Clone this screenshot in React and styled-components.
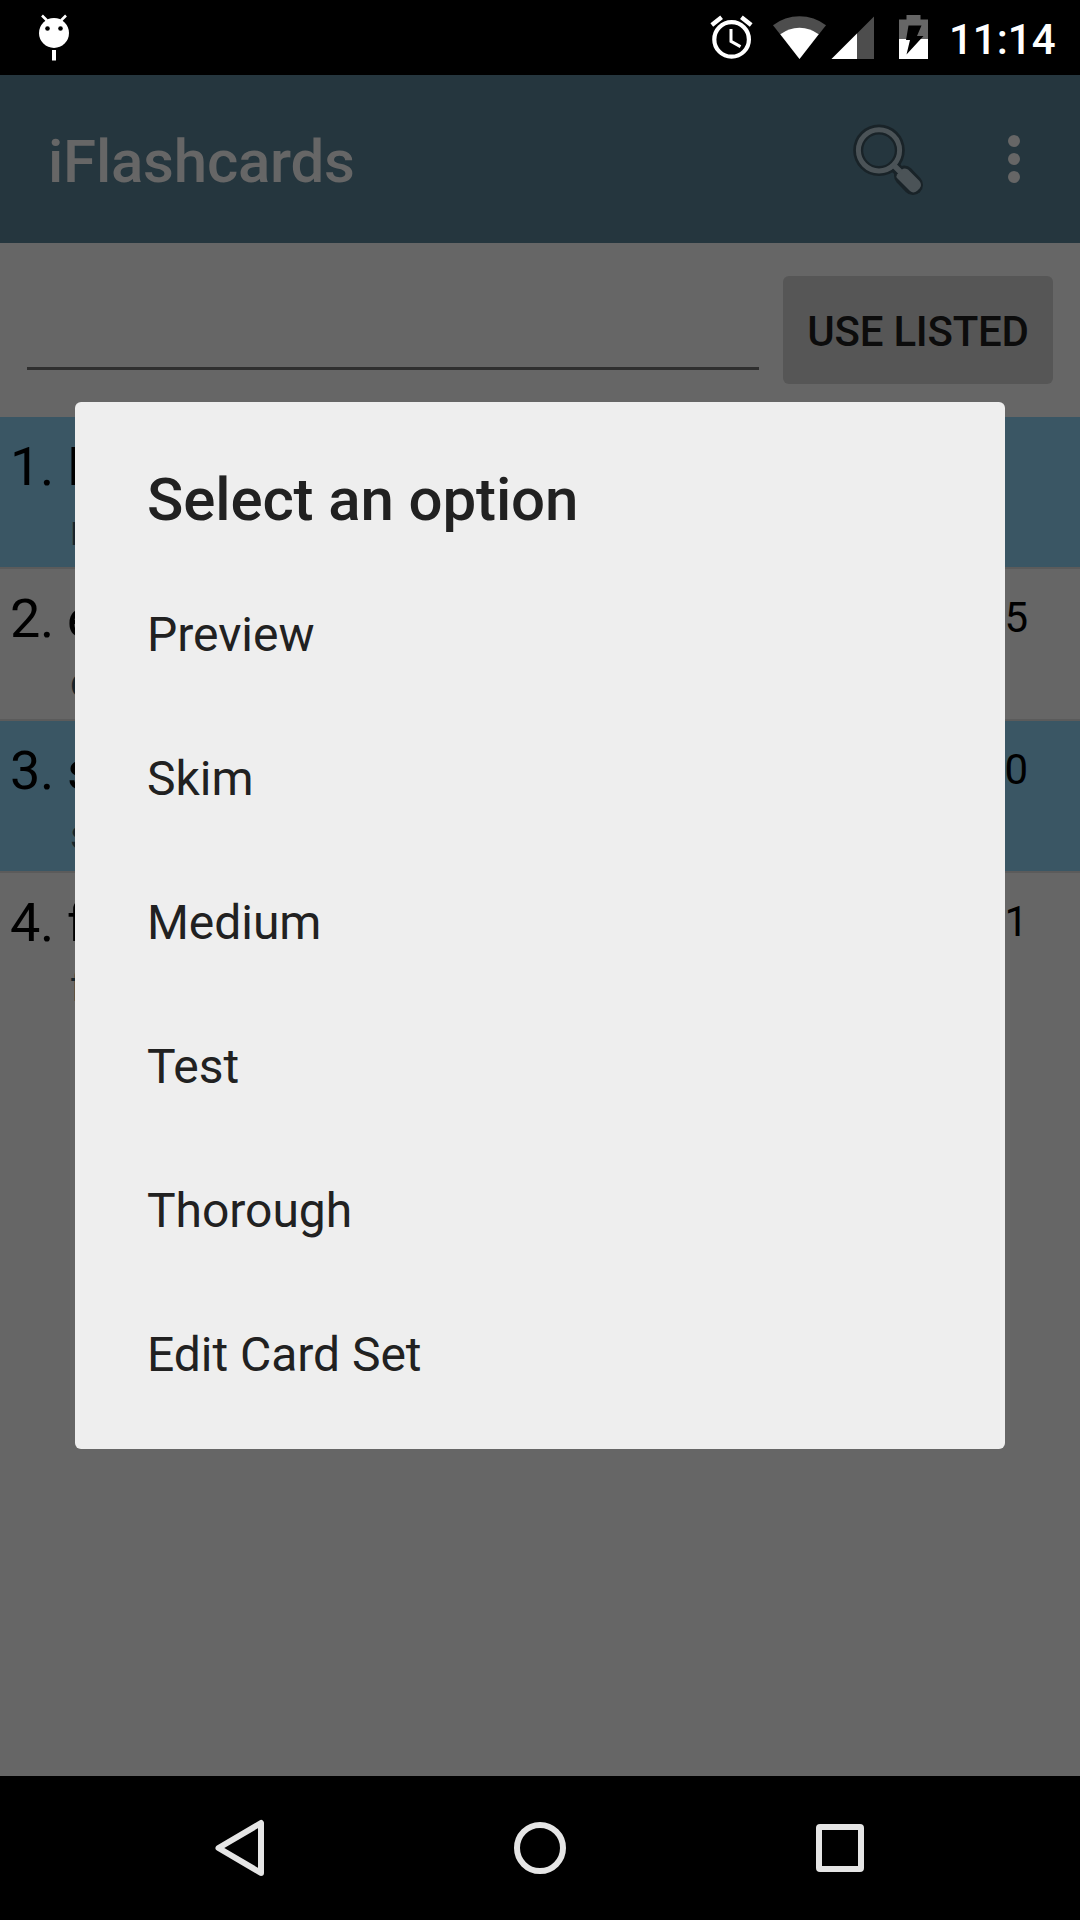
import React from "react";
import styled, { createGlobalStyle } from "styled-components";

const cards = [
  { id: 1, title: "H", subtitle: "n", count: "" },
  { id: 2, title: "e", subtitle: "c", count: "5" },
  { id: 3, title: "s", subtitle: "s", count: "0" },
  { id: 4, title: "f", subtitle: "f", count: "1" },
];

const options = [
  "Preview",
  "Skim",
  "Medium",
  "Test",
  "Thorough",
  "Edit Card Set",
];

const DebugIcon = () => (
  <svg width="32" height="50" viewBox="38 14 32 50">
    <circle cx="54" cy="34" r="15" fill="#fff" />
    <path
      d="M42 16.5l5 5M66 16.5l-5 5"
      stroke="#fff"
      strokeWidth="2.6"
    />
    <circle cx="47.5" cy="29.5" r="2.3" />
    <circle cx="60.5" cy="29.5" r="2.3" />
    <rect x="52" y="51" width="4" height="10.5" fill="#fff" />
  </svg>
);

const StatusIcons = () => (
  <svg width="222" height="75" viewBox="708 0 222 75">
    <g fill="none" stroke="#fff">
      <circle cx="731.6" cy="39.4" r="17.3" strokeWidth="4.2" />
      <path d="M731 29v12.3l9.5 5.3" strokeWidth="3" />
      <path d="M711.8 25l9.8-7.8M751.2 25l-9.8-7.8" strokeWidth="4.4" />
    </g>
    <path
      d="M799.5 59L773 25.3a43.5 43.5 0 0 1 53 0z"
      fill="#4d4d4d"
    />
    <path
      d="M799.5 59L780.3 34.3a31 31 0 0 1 38.4 0z"
      fill="#fff"
    />
    <path d="M874 16.5V59H831.5z" fill="#4d4d4d" />
    <path d="M857 33.5V59H831.5z" fill="#fff" />
    <path
      d="M899 19.5h7.5V15h14v4.5h7.5V39H899z"
      fill="#666"
    />
    <path d="M899 39h29v20h-29z" fill="#fff" />
    <path d="M908.5 25.5h13l-4.5 10.5h6.5l-17 18.5 3.5-14.5h-4z" fill="#000" />
  </svg>
);

const SearchIcon = () => (
  <svg width="76" height="78" viewBox="850 120 76 78">
    <g fill="none" stroke="#192328">
      <circle cx="879" cy="150.3" r="20.8" strokeWidth="10" />
      <path d="M893 165l9 9" strokeWidth="11" />
      <path d="M904 175.5l9 9.5" strokeWidth="20" strokeLinecap="round" />
    </g>
    <g fill="none" stroke="#4b5357">
      <circle cx="879" cy="150.3" r="20.6" strokeWidth="5" />
      <path d="M893.5 165l9 9" strokeWidth="5.5" />
    </g>
    <path
      d="M897 174.500l5-5q2-2 6 0l11.500 11.500q3 4 0 7.500l-2 2q-4 3.500-7.500.5l-12.500-12.500q-2-2-.5-4z"
      fill="#4b5357"
    />
  </svg>
);

const MenuIcon = () => (
  <svg width="12" height="48" viewBox="0 0 12 48" fill="#666">
    <circle cx="6" cy="6" r="6" />
    <circle cx="6" cy="24" r="6" />
    <circle cx="6" cy="42" r="6" />
  </svg>
);

const App = () => {
  return (
    <Screen>
      <GlobalStyle />
      <StatusBar>
        <DebugIcon />
        <StatusRight>
          <StatusIcons />
          <Clock>11:14</Clock>
        </StatusRight>
      </StatusBar>
      <AppBar>
        <AppTitle>iFlashcards</AppTitle>
        <Actions>
          <SearchIcon />
          <MenuIcon />
        </Actions>
      </AppBar>
      <Toolbar>
        <Field />
        <ListedButton>USE LISTED</ListedButton>
      </Toolbar>
      <CardList>
        {cards.map((card) => (
          <CardRow key={card.id} $tinted={card.id % 2 === 1}>
            <CardText>
              <CardTitle>
                {card.id}. {card.title}
              </CardTitle>
              <CardSubtitle>{card.subtitle}</CardSubtitle>
            </CardText>
            <CardCount>{card.count}</CardCount>
          </CardRow>
        ))}
      </CardList>
      <NavBar>
        <svg width="60" height="72" viewBox="210 1812 60 72">
          <path
            d="M261 1823v50L218.5 1848z"
            fill="none"
            stroke="#e5e5e5"
            strokeWidth="6"
            strokeLinejoin="round"
          />
        </svg>
        <svg width="60" height="60" viewBox="0 0 60 60">
          <circle
            cx="30"
            cy="30"
            r="23"
            fill="none"
            stroke="#e5e5e5"
            strokeWidth="6"
          />
        </svg>
        <svg width="60" height="60" viewBox="0 0 60 60">
          <path
            fillRule="evenodd"
            fill="#e5e5e5"
            d="M10 6h40a4 4 0 0 1 4 4v40a4 4 0 0 1-4 4H10a4 4 0 0 1-4-4V10a4 4 0 0 1 4-4zM12 12v36h36V12z"
          />
        </svg>
      </NavBar>
      <Dialog>
        <DialogTitle>Select an option</DialogTitle>
        {options.map((option) => (
          <Option key={option}>{option}</Option>
        ))}
      </Dialog>
    </Screen>
  );
};

const GlobalStyle = createGlobalStyle`
  * {
    box-sizing: border-box;
  }
  body {
    margin: 0;
    background: #666;
    font-family: Roboto, sans-serif;
  }
  svg {
    display: block;
    flex: none;
  }
`;

const Screen = styled.div`
  position: relative;
  display: flex;
  flex-direction: column;
  width: 1080px;
  height: 1920px;
  overflow: hidden;
  background: #666;
`;

const StatusBar = styled.header`
  display: flex;
  align-items: center;
  justify-content: space-between;
  height: 75px;
  padding: 0 24px 0 38px;
  background: #000;
`;

const StatusRight = styled.div`
  display: flex;
  align-items: center;
`;

const Clock = styled.span`
  width: 107px;
  margin-left: 19px;
  padding-top: 4px;
  color: #fff;
  font-size: 42px;
  font-weight: 500;
  line-height: 71px;
  white-space: nowrap;
`;

const AppBar = styled.div`
  display: flex;
  align-items: center;
  justify-content: space-between;
  height: 168px;
  padding: 0 60px 0 48px;
  background: #25363e;
`;

const AppTitle = styled.h1`
  margin: 5px 0 0;
  color: #666;
  font-size: 60px;
  font-weight: 500;
  line-height: 70px;
  letter-spacing: -0.22px;
`;

const Actions = styled.div`
  display: flex;
  align-items: center;
  gap: 82px;
`;

const Toolbar = styled.div`
  display: flex;
  align-items: flex-start;
  height: 174px;
  padding: 33px 27px 0;
  gap: 24px;
`;

const Field = styled.div`
  flex: 1;
  height: 94px;
  border-bottom: 3px solid #2f2f2f;
`;

const ListedButton = styled.button`
  width: 270px;
  height: 108px;
  padding: 2px 0 0;
  border: none;
  border-radius: 6px;
  background: #565656;
  color: #0c0c0c;
  font-family: inherit;
  font-size: 42px;
  font-weight: 500;
  letter-spacing: -0.22px;
  white-space: nowrap;
`;

const CardList = styled.div`
  flex: 1;
`;

const CardRow = styled.div`
  display: flex;
  justify-content: space-between;
  height: 152px;
  padding: 17px 52px 0 10px;
  border-bottom: 2px solid #5b5b5b;
  background: ${(props) => (props.$tinted ? "#3a5664" : "#666")};

  &:last-child {
    border-bottom: none;
  }
`;

const CardText = styled.div`
  padding-top: 1px;
  color: #000;
`;

const CardTitle = styled.div`
  font-size: 54px;
  line-height: 64px;
  letter-spacing: -0.3px;
`;

const CardSubtitle = styled.div`
  margin-top: 7px;
  padding-left: 60px;
  color: #17242b;
  font-size: 42px;
  line-height: 50px;
`;

const CardCount = styled.div`
  color: #000;
  font-size: 42px;
  line-height: 64px;
`;

const NavBar = styled.nav`
  display: flex;
  align-items: center;
  justify-content: space-between;
  height: 144px;
  padding: 0 210px;
  background: #000;
`;

const Dialog = styled.section`
  position: absolute;
  top: 402px;
  left: 75px;
  width: 930px;
  height: 1047px;
  padding: 63px 72px 0;
  border-radius: 6px;
  background: #eee;
  color: #212121;
`;

const DialogTitle = styled.h2`
  margin: 0 0 32px;
  font-size: 60px;
  font-weight: 500;
  line-height: 70px;
  letter-spacing: -0.12px;
`;

const Option = styled.div`
  height: 144px;
  font-size: 48px;
  line-height: 136px;
  letter-spacing: -0.04px;
`;

export default App;
